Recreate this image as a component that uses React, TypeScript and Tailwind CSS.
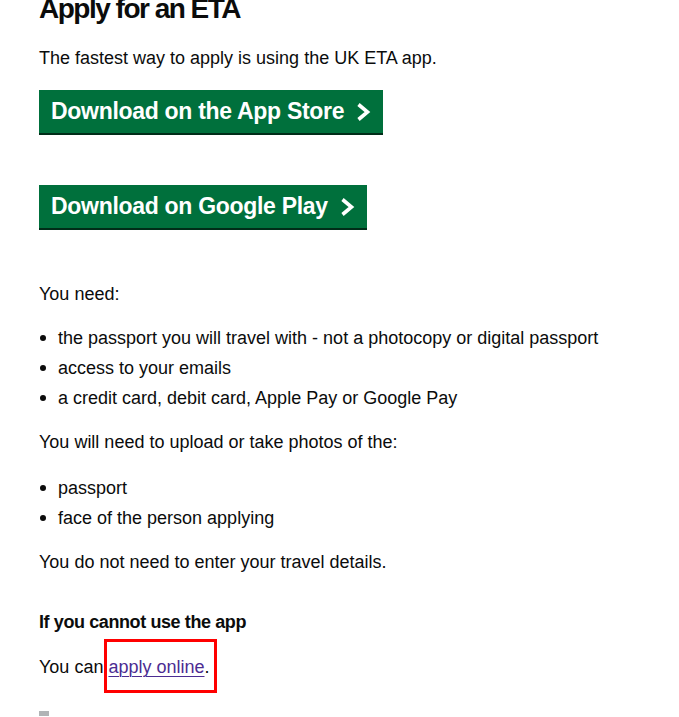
import React from "react";

function Chevron() {
  return (
    <svg width="15" height="18" viewBox="0 0 15 18" className="ml-[12px] shrink-0" aria-hidden="true">
      <path d="M2.5 1.5 L11.5 9 L2.5 16.5" fill="none" stroke="white" strokeWidth="3.6" strokeLinejoin="miter" />
    </svg>
  );
}

function GreenButton({ label }: { label: string }) {
  return (
    <a className="flex items-center bg-[#00703c] text-white font-bold text-[23px] leading-none pl-[12px] pr-[12px] h-[43px] shadow-[0_2px_0_#002d18] tracking-[-0.3px] no-underline">
      {label}
      <Chevron />
    </a>
  );
}

function Bullet({ children }: { children: React.ReactNode }) {
  return (
    <li className="flex items-center h-[30px] pt-[2px]">
      <span className="w-[6px] h-[6px] rounded-full bg-[#0b0c0c] ml-[1px] mr-[12px] shrink-0" />
      <span>{children}</span>
    </li>
  );
}

export default function App() {
  return (
    <div
      className="bg-white text-[#0b0c0c] w-[679px] h-[717px] overflow-hidden pl-[39px] text-[18px] leading-[25px]"
      style={{ fontFamily: '"Liberation Sans", Arial, sans-serif' }}
    >
      <h1 className="font-bold text-[28px] leading-[30px] mt-[-6px] tracking-[-1.5px]">Apply for an ETA</h1>
      <p className="mt-[22px]">The fastest way to apply is using the UK ETA app.</p>
      <div className="mt-[19px] flex">
        <GreenButton label="Download on the App Store" />
      </div>
      <div className="mt-[52px] flex">
        <GreenButton label="Download on Google Play" />
      </div>
      <p className="mt-[54px]">You need:</p>
      <ul className="mt-[15px]">
        <Bullet>the passport you will travel with - not a photocopy or digital passport</Bullet>
        <Bullet>access to your emails</Bullet>
        <Bullet>a credit card, debit card, Apple Pay or Google Pay</Bullet>
      </ul>
      <p className="mt-[18px]">You will need to upload or take photos of the:</p>
      <ul className="mt-[17px]">
        <Bullet>passport</Bullet>
        <Bullet>face of the person applying</Bullet>
      </ul>
      <p className="mt-[18px]">You do not need to enter your travel details.</p>
      <h2 className="font-bold mt-[35px] tracking-[-0.4px]">If you cannot use the app</h2>
      <p className="mt-[20px]">
        You can{" "}
        <span className="relative inline-block leading-[25px]">
          <a className="text-[#4c2c92] underline underline-offset-[3px] decoration-1">apply online</a>
          <span className="absolute left-[-4px] right-[-12px] top-[-16px] bottom-[-13px] border-[3px] border-[#ff0000] pointer-events-none" />
        </span>
        .
      </p>
      <div className="mt-[31px] w-[10px] h-[5px] bg-[#b1b4b6]" />
    </div>
  );
}
